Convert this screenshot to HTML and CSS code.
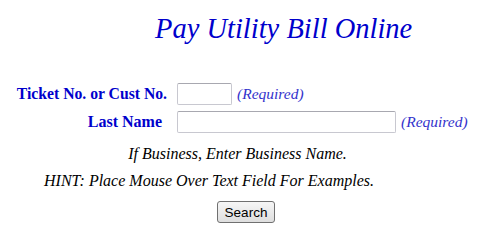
FILE: index.html
```html
<!DOCTYPE html>
<html>
<head>
<meta charset="utf-8">
<link rel="stylesheet" href="styles.css">
</head>
<body>
<div class="page">
  <h1 class="title">Pay Utility Bill Online</h1>
  <form class="form">
    <div class="row">
      <label class="label label-ticket">Ticket No. or Cust No.</label>
      <div class="field"><input class="input input-ticket" type="text"><span class="req">(Required)</span></div>
    </div>
    <div class="row">
      <label class="label label-name">Last Name</label>
      <div class="field"><input class="input input-name" type="text"><span class="req">(Required)</span></div>
    </div>
    <p class="note note-business">If Business, Enter Business Name.</p>
    <p class="note note-hint">HINT: Place Mouse Over Text Field For Examples.</p>
    <div class="actions"><button class="btn" type="button">Search</button></div>
  </form>
</div>
</body>
</html>
```

FILE: styles.css
```css
html, body {
  margin: 0;
  padding: 0;
  background: #ffffff;
}
.page {
  width: 483px;
  height: 244px;
  font-family: "Liberation Serif", "Times New Roman", serif;
}
.title {
  margin: 0;
  padding: 13px 0 0 155px;
  font-size: 28.5px;
  font-weight: normal;
  font-style: italic;
  color: #0000cc;
  line-height: 32px;
  height: 80px;
  box-sizing: border-box;
  white-space: nowrap;
}
.form {
  margin: 0;
}
.row {
  display: grid;
  grid-template-columns: 177px 1fr;
  align-items: center;
  height: 28px;
}
.label {
  font-weight: bold;
  font-size: 16px;
  color: #0000cc;
  text-align: right;
  white-space: nowrap;
}
.label-ticket { padding-right: 10px; font-size: 15.7px; }
.label-name { padding-right: 15px; }
.field {
  display: flex;
  align-items: center;
  gap: 5px;
}
.input {
  box-sizing: border-box;
  height: 22px;
  border: 1px solid #c8c8d0;
  border-top-color: #a8a8b0;
  border-radius: 2px;
  background: #fff;
  padding: 0;
  margin: 0;
}
.input-ticket { width: 55px; }
.input-name { width: 219px; }
.req {
  font-style: italic;
  font-size: 15.5px;
  color: #3333cc;
  white-space: nowrap;
}
.note {
  margin: 0;
  font-style: italic;
  font-size: 16px;
  color: #000;
  line-height: 27px;
  white-space: nowrap;
}
.note-business {
  text-align: center;
  padding-right: 8px;
  margin-top: 4px;
}
.note-hint {
  padding-left: 44px;
}
.actions {
  display: flex;
  justify-content: center;
  padding-top: 7px;
  padding-left: 9px;
}
.btn {
  width: 58px;
  height: 22px;
  font-family: "Liberation Sans", Arial, sans-serif;
  font-size: 13.5px;
  color: #000;
  background: linear-gradient(#f6f6f6, #dedede);
  border: 1px solid #707070;
  border-radius: 3px;
  padding: 0;
}
```
